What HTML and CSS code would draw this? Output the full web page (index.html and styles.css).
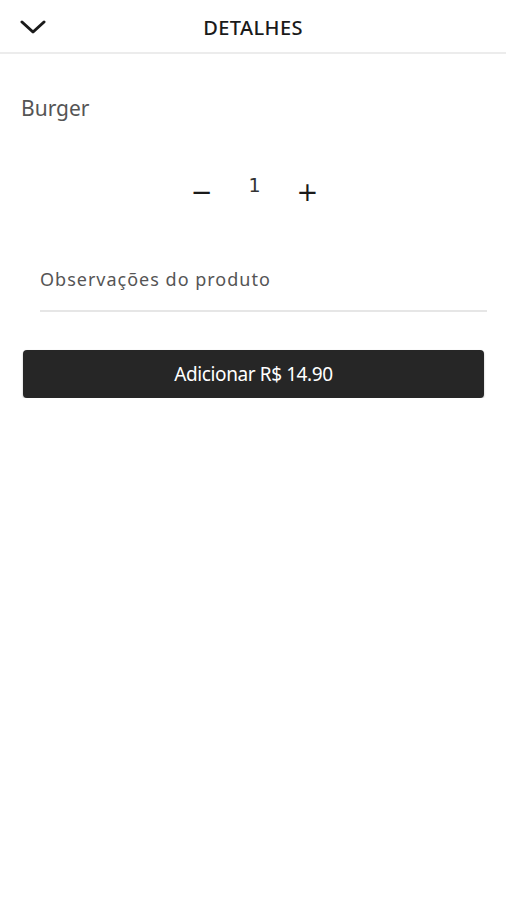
FILE: index.html
```html
<!DOCTYPE html>
<html lang="pt-BR">
<head>
    <meta charset="UTF-8">
    <meta name="viewport" content="width=device-width, initial-scale=1.0">
    <title>Detalhes</title>
    <link rel="stylesheet" href="styles.css">
</head>
<body>
    <header class="top-bar">
        <button type="button" class="back-btn" aria-label="Fechar">
            <svg width="26" height="16" viewBox="0 0 26 16">
                <path d="M2 3 L13 13 L24 3" fill="none" stroke="#1a1a1a" stroke-width="3" stroke-linecap="round" stroke-linejoin="round"/>
            </svg>
        </button>
        <h1 class="title">DETALHES</h1>
        <span></span>
    </header>

    <main class="details">
        <h2 class="product-name">Burger</h2>

        <div class="quantity">
            <button type="button" class="qty-btn minus">&minus;</button>
            <span class="qty-value">1</span>
            <button type="button" class="qty-btn plus">+</button>
        </div>

        <div class="notes">
            <input type="text" class="notes-input" placeholder="Observações do produto">
        </div>

        <button type="button" class="add-btn">Adicionar R$ 14.90</button>
    </main>
</body>
</html>
```

FILE: styles.css
```css
body {
    font-family: "Noto Sans", "Open Sans", sans-serif;
    margin: 0;
    padding: 0;
    background-color: #fff;
    color: #1a1a1a;
}
.top-bar {
    display: grid;
    grid-template-columns: 1fr auto 1fr;
    align-items: center;
    height: 54px;
    box-sizing: border-box;
    border-bottom: 2px solid #ececec;
    padding: 2px 20px 0;
}
.back-btn {
    justify-self: start;
    background: none;
    border: none;
    padding: 0;
    display: flex;
    cursor: pointer;
}
.title {
    margin: 0;
    font-size: 20px;
    font-weight: 500;
    letter-spacing: 0.4px;
    color: #1a1a1a;
}
.details {
    display: flex;
    flex-direction: column;
    padding: 0 22px 0 21px;
}
.product-name {
    margin: 40px 0 0;
    font-size: 21px;
    font-weight: 400;
    color: #555;
}
.quantity {
    display: flex;
    justify-content: center;
    align-items: center;
    gap: 36px;
    margin-top: 55px;
    margin-left: 4px;
}
.qty-btn {
    background: none;
    border: none;
    padding: 0;
    font-family: "DejaVu Sans", sans-serif;
    font-size: 26px;
    line-height: 30px;
    color: #1a1a1a;
    cursor: pointer;
}
.qty-value {
    font-family: "DejaVu Sans", sans-serif;
    font-size: 19px;
    margin-top: -14px;
    color: #333;
}
.notes {
    margin: 60px -3px 0 19px;
}
.notes-input {
    width: 100%;
    box-sizing: border-box;
    border: none;
    border-bottom: 2px solid #e6e6e6;
    padding: 0 0 19px;
    font-family: inherit;
    font-size: 18px;
    letter-spacing: 1px;
    color: #333;
    outline: none;
}
.notes-input::placeholder {
    color: #555;
}
.add-btn {
    margin: 38px 0 0 2px;
    height: 48px;
    background-color: #262626;
    color: white;
    border: none;
    border-radius: 4px;
    box-shadow: 0 1px 2px rgba(0, 0, 0, 0.3);
    font-family: inherit;
    font-size: 19px;
    letter-spacing: -0.4px;
    cursor: pointer;
}
```
